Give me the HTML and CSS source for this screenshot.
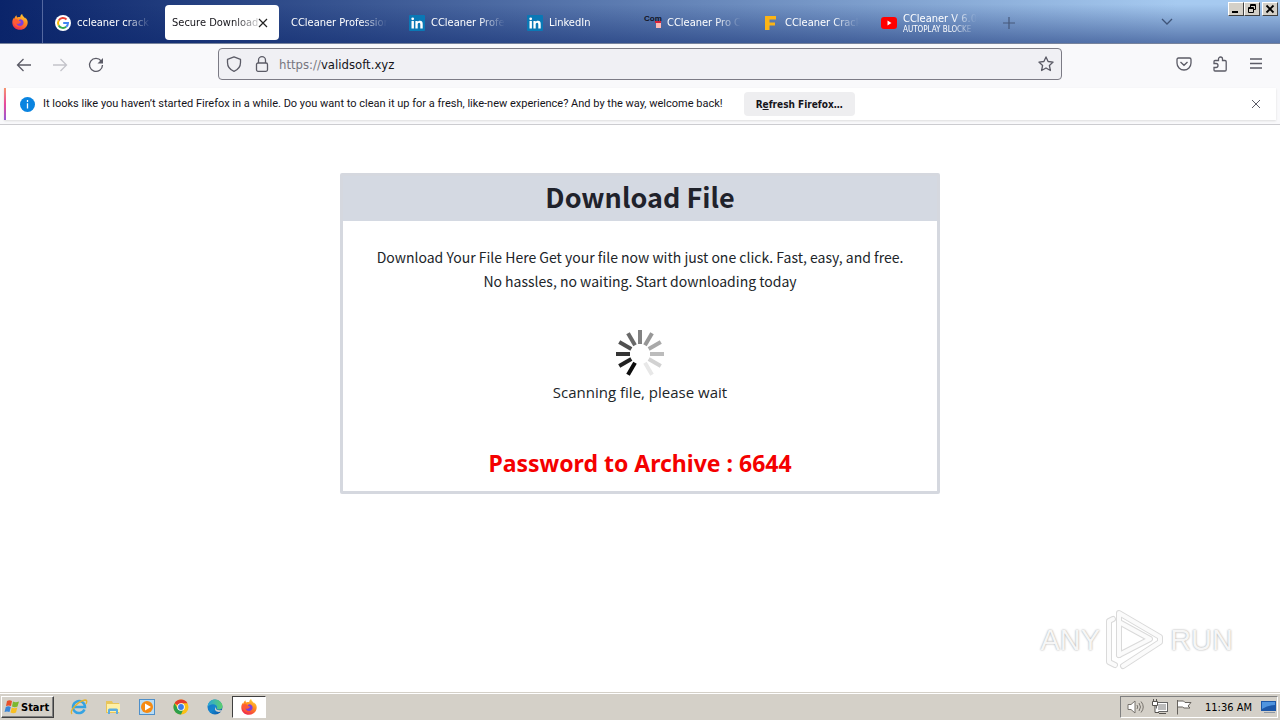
FILE: index.html
```html
<!DOCTYPE html>
<html lang="en">
<head>
<meta charset="utf-8">
<meta name="viewport" content="width=device-width, initial-scale=1">
<title>Secure Download</title>
<link rel="stylesheet" href="styles.css">
</head>
<body>
<svg class="defs" width="0" height="0" aria-hidden="true">
  <defs>
    <linearGradient id="fx" x1="0.8" y1="0" x2="0.3" y2="1"><stop offset="0" stop-color="#ffd83a"/><stop offset="0.45" stop-color="#ff8a1f"/><stop offset="1" stop-color="#f0264f"/></linearGradient>
    <linearGradient id="edge" x1="0" y1="0" x2="1" y2="1"><stop offset="0" stop-color="#1b6fc0"/><stop offset="0.5" stop-color="#1586cf"/><stop offset="1" stop-color="#0b4fa0"/></linearGradient>
    <linearGradient id="edgetop" x1="0" y1="0" x2="1" y2="0"><stop offset="0" stop-color="#2aa5dc"/><stop offset="1" stop-color="#5ccf6c"/></linearGradient>
    <symbol id="firefox" viewBox="0 0 16 16">
      <path fill="url(#fx)" d="M8 15.8C3.700 15.800.3 12.600.3 8.400c0-2 .7-3.500 1.500-4.600l.2 1.300C2.600 3.300 3.500 2 4.400 1.200c0 1 .4 1.800 1 2.300 1-.4 1.900-.5 2.800-.3C8.200 1.900 9 .7 10.200 0c0 1.500 1 2.200 2 3.200.5.500.9 1 1.100 1.600V3.600c1.600 1.500 2.500 3.400 2.400 5.100-.2 4-3.500 7.100-7.700 7.100z"/>
      <path fill="#7a3fe0" d="M8.100 5.200c2.100 0 3.500 1.500 3.500 3.400 0 2-1.600 3.400-3.500 3.400-2 0-3.500-1.300-3.600-3 1 .8 2.400.7 3.200 0 .6-.5 1.200-.6 1.200-.9 0-.4-1.300-.4-1.900-1-.4-.4-.3-1.500 1.100-1.900z"/>
      <path fill="#ff5a36" d="M1.200 6.500c1-1 3-1.600 4.500-.8.8.4.4.8 1.300 1.600.7.500 1.900.4 1.900.8 0 .5-.9.600-1.400 1.100-.8.700-2.300.7-3.300-.3.200 1.800 1.500 3.400 4 3.500-3.500 1.700-7-1.500-7-5.900z"/>
    </symbol>
    <symbol id="linkedin" viewBox="0 0 16 16">
      <rect width="16" height="16" rx="1" fill="#0a78b5"/>
      <path fill="#fff" d="M2.500 6h2.400v7.500H2.500zM3.700 2.400a1.400 1.400 0 1 1 0 2.800 1.400 1.400 0 0 1 0-2.800zM6.400 6h2.300v1c.4-.7 1.200-1.200 2.300-1.200 2.300 0 2.700 1.500 2.700 3.500v4.200h-2.400V9.800c0-.9 0-2-1.200-2s-1.400 1-1.400 2v3.700H6.400z"/>
    </symbol>
  </defs>
</svg>

<div class="screen">
  <header class="tabstrip">
    <button class="pinned" aria-label="Firefox View"><svg width="16" height="16"><use href="#firefox"/></svg></button>
    <div class="tabs" role="tablist">
      <button class="tab" role="tab">
        <svg width="16" height="16" viewBox="0 0 16 16"><circle cx="8" cy="8" r="8" fill="#fff"/><g fill="none" stroke-width="2"><path stroke="#ea4335" d="M3.700 5.500A5 5 0 0 1 11.500 4.500"/><path stroke="#fbbc05" d="M3.700 5.500a5 5 0 0 0 0 5"/><path stroke="#34a853" d="M3.700 10.500a5 5 0 0 0 7.500 1.300"/><path stroke="#4285f4" d="M11.200 11.800A5 5 0 0 0 13 8H8.200"/></g></svg>
        <span class="tab-label">ccleaner crack -</span>
      </button>
      <div class="tab tab-active">
        <span class="tab-label" role="tab" aria-selected="true">Secure Download</span>
        <button class="tab-close" aria-label="Close tab"><svg width="10" height="10" viewBox="0 0 10 10"><path d="M1 1l8 8M9 1L1 9" stroke="#222" stroke-width="1.200"/></svg></button>
      </div>
      <button class="tab" role="tab"><span class="tab-label">CCleaner Profession</span></button>
      <button class="tab" role="tab"><svg width="16" height="16"><use href="#linkedin"/></svg><span class="tab-label">CCleaner Profe</span></button>
      <button class="tab" role="tab"><svg width="16" height="16"><use href="#linkedin"/></svg><span class="tab-label">LinkedIn</span></button>
      <button class="tab" role="tab">
        <svg width="16" height="16" viewBox="0 0 16 16"><text x="-1" y="6" class="com">Com</text><rect x="10" y="6" width="6" height="2" fill="#d8203a"/><rect x="11" y="8" width="5" height="5" fill="#ffb9b4"/></svg>
        <span class="tab-label">CCleaner Pro C</span>
      </button>
      <button class="tab" role="tab">
        <svg width="16" height="16" viewBox="0 0 16 16"><path fill="#fcb415" d="M2 1h11v3.500H6.500v3H12v3H6.500V15H2z"/></svg>
        <span class="tab-label">CCleaner Crack</span>
      </button>
      <button class="tab" role="tab">
        <svg width="16" height="16" viewBox="0 0 16 16"><rect y="2" width="16" height="12" rx="3" fill="#f00"/><path fill="#fff" d="M6.500 5.500v5L10.500 8z"/></svg>
        <span class="tab-label">CCleaner V 6.0<small>AUTOPLAY BLOCKE</small></span>
      </button>
      <button class="newtab" aria-label="New tab"><svg width="12" height="12" viewBox="0 0 12 12"><path d="M6 0v12M0 6h12" stroke="#47597a" stroke-width="1.200"/></svg></button>
    </div>
    <button class="alltabs" aria-label="List all tabs"><svg width="12" height="8" viewBox="0 0 12 8"><path d="M1 1l5 5 5-5" fill="none" stroke="#3f5478" stroke-width="1.300"/></svg></button>
    <div class="winbtns">
      <button aria-label="Minimize"><svg width="12" height="10" viewBox="0 0 12 10"><path d="M2 8h6" stroke="#000" stroke-width="2"/></svg></button>
      <button aria-label="Restore"><svg width="12" height="10" viewBox="0 0 12 10"><path d="M4.500 3V.5h5v5H8M4 1.500h6M2.500 3.500h5v5h-5zM2 4.500h6" fill="none" stroke="#000"/></svg></button>
      <button class="close" aria-label="Close"><svg width="12" height="10" viewBox="0 0 12 10"><path d="M2.500 1.500l7 7M9.500 1.500l-7 7" stroke="#000" stroke-width="1.800"/></svg></button>
    </div>
  </header>

  <nav class="toolbar">
    <div class="nav-left">
      <button aria-label="Back"><svg width="16" height="16" viewBox="0 0 16 16"><path d="M15 8H1.500M7.500 2L1.500 8l6 6" fill="none" stroke="#5b5b66" stroke-width="1.300"/></svg></button>
      <button aria-label="Forward" disabled><svg width="16" height="16" viewBox="0 0 16 16"><path d="M1 8h13.500M8.500 2l6 6-6 6" fill="none" stroke="#c4c4ca" stroke-width="1.300"/></svg></button>
      <button aria-label="Reload"><svg width="16" height="16" viewBox="0 0 16 16"><path d="M13.200 4A6.500 6.500 0 1 0 14.500 8" fill="none" stroke="#5b5b66" stroke-width="1.300"/><path d="M15 1v5.500H9.500z" fill="#5b5b66"/></svg></button>
    </div>
    <div class="urlbar">
      <svg width="16" height="16" viewBox="0 0 16 16"><path d="M8 .8l6.500 2.500v3.200c0 4-2.500 7.200-6.500 8.800-4-1.600-6.500-4.800-6.500-8.800V3.300z" fill="none" stroke="#5b5b66" stroke-width="1.300" stroke-linejoin="round"/></svg>
      <svg class="lock" width="16" height="16" viewBox="0 0 16 16"><rect x="2.500" y="7" width="11" height="8.300" rx="1.500" fill="none" stroke="#5b5b66" stroke-width="1.300"/><path d="M4.500 7V4.200a3.500 3.500 0 0 1 7 0V7" fill="none" stroke="#5b5b66" stroke-width="1.300"/></svg>
      <label for="url">https://</label><input id="url" type="text" value="validsoft.xyz">
      <button aria-label="Bookmark"><svg width="16" height="16" viewBox="0 0 16 16"><path d="M8 .9l2.100 4.600 5 .6-3.700 3.400 1 5L8 12l-4.400 2.500 1-5L.9 6.100l5-.6z" fill="none" stroke="#5b5b66" stroke-width="1.300" stroke-linejoin="round"/></svg></button>
    </div>
    <div class="nav-right">
      <button aria-label="Pocket"><svg width="16" height="16" viewBox="0 0 16 16"><path d="M2.500 2h11q1.500 0 1.500 1.500V7A7 7 0 0 1 1 7V3.500Q1 2 2.500 2zM4.500 6L8 9.300 11.500 6" fill="none" stroke="#5b5b66" stroke-width="1.300"/></svg></button>
      <button aria-label="Extensions"><svg width="16" height="16" viewBox="0 0 16 16"><path d="M2 7.500V5.500Q2 4.500 3 4.500h3.500V3a2 2 0 0 1 4 0v1.500H13q1.200 0 1.200 1.200v8.100q0 1.200-1.200 1.200H3q-1 0-1-1v-2.500h2a2 2 0 0 0 0-4z" fill="none" stroke="#5b5b66" stroke-width="1.300"/></svg></button>
      <button aria-label="Menu"><svg width="16" height="16" viewBox="0 0 16 16"><path d="M2 3h12M2 7.500h12M2 12h12" stroke="#5b5b66" stroke-width="1.300"/></svg></button>
    </div>
  </nav>

  <div class="notice-wrap">
    <div class="notice">
      <svg width="15" height="15" viewBox="0 0 15 15"><circle cx="7.500" cy="7.500" r="7.500" fill="#0a84e0"/><path d="M7.500 3v2M7.500 6.300v5.200" stroke="#fff" stroke-width="1.300"/></svg>
      <p>It looks like you haven’t started Firefox in a while. Do you want to clean it up for a fresh, like-new experience? And by the way, welcome back!</p>
      <button class="refresh"><span>R<u>e</u>fresh Firefox…</span></button>
      <button class="dismiss" aria-label="Dismiss"><svg width="10" height="10" viewBox="0 0 10 10"><path d="M1 1l8 8M9 1L1 9" stroke="#5b5b66"/></svg></button>
    </div>
  </div>

  <main class="page">
    <section class="card">
      <h1>Download File</h1>
      <div class="card-body">
        <p class="lead">Download Your File Here Get your file now with just one click. Fast, easy, and free. No hassles, no waiting. Start downloading today</p>
        <svg class="spinner" width="48" height="48" viewBox="-24 -24 48 48" stroke-width="4">
          <path stroke="#828282" d="M0-24v14"/>
          <path stroke="#979797" d="M0-24v14" transform="rotate(30)"/>
          <path stroke="#a9a9a9" d="M0-24v14" transform="rotate(60)"/>
          <path stroke="#bcbcbc" d="M0-24v14" transform="rotate(90)"/>
          <path stroke="#d2d2d2" d="M0-24v14" transform="rotate(120)"/>
          <path stroke="#e8e8e8" d="M0-24v14" transform="rotate(150)"/>
          <path stroke="#0c0c0c" d="M0-24v14" transform="rotate(210)"/>
          <path stroke="#222" d="M0-24v14" transform="rotate(240)"/>
          <path stroke="#353535" d="M0-24v14" transform="rotate(270)"/>
          <path stroke="#505050" d="M0-24v14" transform="rotate(300)"/>
          <path stroke="#696969" d="M0-24v14" transform="rotate(330)"/>
        </svg>
        <p class="status">Scanning file, please wait</p>
        <p class="password">Password to Archive : 6644</p>
      </div>
    </section>
    <div class="watermark">
      <span>ANY</span>
      <svg width="60" height="64" viewBox="0 0 60 64" fill="none" stroke-linejoin="round" stroke-linecap="round">
        <g stroke="#dadada" stroke-width="6"><path d="M8 11L4 13V54L10 57"/><path d="M14 47V5L55 29V34L18 58"/><path d="M14 47L45 31L14 14"/></g>
        <g stroke="#fbfbfb" stroke-width="4"><path d="M8 11L4 13V54L10 57"/><path d="M14 47V5L55 29V34L18 58"/><path d="M14 47L45 31L14 14"/></g>
      </svg>
      <span>RUN</span>
    </div>
  </main>

  <footer class="taskbar">
    <button class="start"><svg width="16" height="16" viewBox="0 0 16 16"><path fill="#e8502a" d="M3 2q2.500-1.500 5 0L7 7Q4.500 5.800 2 7z"/><path fill="#7cb82f" d="M9 2.500q2.500 1.300 6 0L13.500 7.500Q11 9 8 7.500z"/><path fill="#3a86d8" d="M1.800 8q2.500-1.300 5 0L5.500 13Q3 11.800.5 13z"/><path fill="#f8bf22" d="M7.800 8.500q2.500 1.300 5.500 0L12 13.500Q9.500 15 6.500 13.500z"/></svg>Start</button>
    <div class="tasks">
      <button aria-label="Internet Explorer"><svg width="18" height="18" viewBox="0 0 18 18"><path d="M14.500 11.500A6 6 0 1 1 15 9H4" fill="none" stroke="#35a3e2" stroke-width="2.500"/><path d="M2 16C-1 13 8 3 15 2q3 0 1 4" fill="none" stroke="#e5b32c" stroke-width="1.300"/></svg></button>
      <button aria-label="Explorer"><svg width="18" height="18" viewBox="0 0 18 18"><path fill="#e8c55b" d="M2 3h6l1 2h6v10H2z"/><path fill="#fff0a5" d="M3 6h13v8H3z"/><path fill="#5dade0" d="M4 16v-4q0-1.500 1.500-1.500h7Q14 10.500 14 12v4h-2v-3H6v3z"/></svg></button>
      <button aria-label="Media Player"><svg width="18" height="18" viewBox="0 0 18 18"><rect x="1.500" y="1.500" width="15" height="15" fill="#b8dcf5" stroke="#4e8fc9"/><circle cx="9" cy="9" r="6" fill="#f58a12"/><path fill="#fff" d="M7 5.500v7L13 9z"/></svg></button>
      <button aria-label="Chrome"><svg width="18" height="18" viewBox="0 0 18 18"><circle cx="9" cy="9" r="7.500" fill="#fbc016"/><path fill="#e33b2e" d="M9 9L2.500 5.250A7.500 7.500 0 0 1 15.500 5.250H9z"/><path fill="#2c9f4b" d="M9 16.500A7.500 7.500 0 0 1 2.500 5.250L6 11l5 1z"/><circle cx="9" cy="9" r="3.800" fill="#fff"/><circle cx="9" cy="9" r="2.900" fill="#3b7de8"/></svg></button>
      <button aria-label="Edge"><svg width="18" height="18" viewBox="0 0 18 18"><circle cx="9" cy="9" r="7.500" fill="url(#edge)"/><path fill="url(#edgetop)" d="M1.500 9C2 4 5 1.500 9 1.500S16.500 5 16.500 8s-2 3.500-4 3.500-2-1-1.500-2C11.500 6 5 4.500 1.500 9z"/><path fill="#d4d0c8" d="M10 9q-1 4 6 3l-.8 1.500C11 15 7 12 10 9z"/></svg></button>
      <button class="task-active" aria-label="Firefox"><svg width="16" height="16"><use href="#firefox"/></svg></button>
    </div>
    <div class="tray">
      <svg width="18" height="16" viewBox="0 0 18 16" fill="none" stroke="#77736d"><path fill="#fff" d="M1 5.500h3L8 2v12L4 10.500H1z"/><path d="M10 6q1.500 2 0 4M12 4q3 4 0 8M14 2.500q4.500 5.500 0 11"/></svg>
      <svg width="18" height="16" viewBox="0 0 18 16" fill="none" stroke="#55524e"><rect x="5.500" y="3.500" width="11" height="9" fill="#bbb" stroke="#666"/><rect x="6.500" y="4.500" width="9" height="7" stroke="#fff"/><path d="M8 14.500h7M1.500 2.500h5v4h-5zM2.500 0v2M5.500 0v2M4 7v6.500h4" fill="#fff"/></svg>
      <svg width="18" height="16" viewBox="0 0 18 16" fill="#fff" stroke="#66625d"><path d="M2.500 1v14.500M2.500 2h6l1.500 1.500h6L13 7l2 2H9L7.500 8h-5z"/></svg>
      <time>11:36 AM</time>
      <svg width="16" height="16" viewBox="0 0 16 16"><rect x="1" y="2" width="15" height="10" fill="#1c57a8"/><path fill="#4f94df" d="M2 3h13v3Q8 6 2 10z"/><path stroke="#8d98a5" d="M4 13.500h11"/></svg>
    </div>
  </footer>
</div>
</body>
</html>
```
FILE: styles.css
```css
* { box-sizing: border-box; }

body {
  margin: 0;
  font-family: "DejaVu Sans Condensed", "Noto Sans", sans-serif;
  font-size: 11px;
  color: #15141a;
}

button {
  display: flex;
  align-items: center;
  justify-content: center;
  margin: 0;
  padding: 0;
  border: 0;
  background: none;
  font: inherit;
  color: inherit;
}

svg { flex: none; display: block; overflow: visible; }
p, h1 { margin: 0; }
.defs { position: absolute; }

.screen {
  display: flex;
  flex-direction: column;
  min-height: 100vh;
  background: #fff;
}

/* Tab strip */
.tabstrip {
  display: flex;
  height: 44px;
  border-bottom: 1px solid #77839c;
  background:
    linear-gradient(to bottom, transparent 10%, rgba(10, 36, 106, 0.5)),
    linear-gradient(to right, #0a246a, #a6caf0 92%);
  color: #fff;
}

.pinned {
  width: 43px;
  padding-right: 3px;
  border-right: 1px solid #5468a0;
}

.tabs {
  display: flex;
  flex: 1;
  min-width: 0;
  padding: 5px 0 3px 4px;
}

.tab {
  display: flex;
  flex: 0 1 114px;
  align-items: center;
  justify-content: flex-start;
  gap: 6px;
  min-width: 0;
  margin-right: 4px;
  padding: 0 6px 0 8px;
  text-align: left;
}

.tab-label {
  flex: 1;
  min-width: 0;
  overflow: hidden;
  white-space: nowrap;
  line-height: 14px;
  mask-image: linear-gradient(to left, transparent 4px, #000 30px);
}

.tab-label small { display: block; font-size: 8px; line-height: 8px; }

.tab-active {
  border-radius: 4px;
  background: #fff;
  color: #15141a;
  padding-right: 11px;
  padding-left: 7px;
  gap: 0;
}

.tab-active .tab-label { mask-image: linear-gradient(to left, rgba(0, 0, 0, 0.2), #000 24px); }

.tab-close { width: 10px; }
.com { font: bold 8px "Liberation Sans", sans-serif; fill: #10131f; }
.newtab { width: 36px; }
.alltabs { width: 32px; margin-right: 45px; }

.winbtns { display: flex; padding: 2px 2px 0 0; }

.winbtns button {
  width: 16px;
  height: 14px;
  border: 1px solid;
  border-color: #fff #404040 #404040 #fff;
  background: #d4d0c8;
}

.winbtns .close { margin-left: 2px; }

/* Navigation toolbar */
.toolbar {
  display: flex;
  align-items: flex-start;
  height: 44px;
  padding: 4px 16px 0;
  background: #f9f9fb;
}

.nav-left, .nav-right { display: flex; flex: 1 0 0; gap: 20px; height: 32px; }
.nav-left { padding-top: 2px; }
.nav-right { justify-content: flex-end; }

.urlbar {
  display: flex;
  align-items: center;
  flex: 0 1 844px;
  min-width: 0;
  height: 32px;
  padding: 0 7px;
  border: 1px solid #7c7b85;
  border-radius: 4px;
  background: #f0f0f4;
  font-size: 13px;
}

.lock { margin: 0 9px 0 12px; }
.urlbar label { color: #77767f; }

.urlbar input {
  flex: 1;
  min-width: 0;
  padding: 0;
  border: 0;
  outline: 0;
  background: none;
  font: inherit;
  color: #15141a;
}

/* Notification bar */
.notice-wrap {
  padding: 0 4px 4px;
  border-bottom: 1px solid #ccccd0;
  background: #f9f9fb;
}

.notice {
  display: flex;
  align-items: center;
  min-height: 32px;
  padding: 0 15px 0 14px;
  border-left: 2px solid;
  border-image: linear-gradient(#f79a6b, #e8489c, #9059d8) 1;
  background: #fff;
  box-shadow: 0 1px 2px #ddd;
}

.notice p { margin-left: 8px; padding-bottom: 1px; font-family: Roboto, sans-serif; }

.refresh {
  height: 24px;
  margin-left: 21px;
  padding: 0 12px;
  border-radius: 4px;
  background: #eeeef0;
  font-weight: bold;
  font-size: 10px;
  white-space: nowrap;
}

.dismiss { margin-left: auto; }

/* Web page */
.page {
  position: relative;
  flex: 1;
  padding: 48px 16px;
}

.card {
  max-width: 600px;
  margin: 0 auto;
  border: 3px solid #d5d8df;
  border-radius: 2px;
  text-align: center;
  color: #212529;
}

.card h1 {
  padding-bottom: 3px;
  background: #d4d9e2;
  font: bold 27px/42px "Noto Sans CJK SC", sans-serif;
  color: #1f222b;
}

.card-body { padding: 24px 24px 10px; }
.lead { font: 14px/24px "Noto Sans CJK SC", sans-serif; }
.spinner { margin: 37px auto 0; }
.status { font: 15px/24px "Open Sans", sans-serif; margin-top: 2px; }
.password { margin-top: 41px; font: bold 23px/36px "Noto Sans", sans-serif; color: #f40000; }

.watermark {
  position: absolute;
  right: 47px;
  bottom: 20px;
  display: flex;
  align-items: center;
  gap: 5px;
  font: 29px "Liberation Sans", sans-serif;
  color: #f6f6f6;
  text-shadow: 0 0 2px #999;
}

/* Taskbar */
.taskbar {
  display: flex;
  align-items: center;
  height: 28px;
  padding: 1px 2px 0 1px;
  border-top: 1px solid #d4d0c8;
  box-shadow: inset 0 1px #fff;
  background: #d4d0c8;
  color: #000;
}

.start {
  gap: 1px;
  height: 22px;
  padding: 0 4px 0 2px;
  border: 1px solid;
  border-color: #fff #404040 #404040 #fff;
  box-shadow: inset -1px -1px #808080;
  font-weight: bold;
}

.tasks { display: flex; flex: 1; padding-left: 8px; }
.tasks button { width: 34px; height: 22px; }

.tasks .task-active {
  border: 1px solid;
  border-color: #404040 #fff #fff #404040;
  background: #fff;
}

.tray {
  display: flex;
  align-items: center;
  gap: 6px;
  height: 22px;
  padding: 0 1px 0 6px;
  border: 1px solid;
  border-color: #808080 #fff #fff #808080;
}

.tray time { margin: 0 2px 0 6px; white-space: nowrap; }
```
